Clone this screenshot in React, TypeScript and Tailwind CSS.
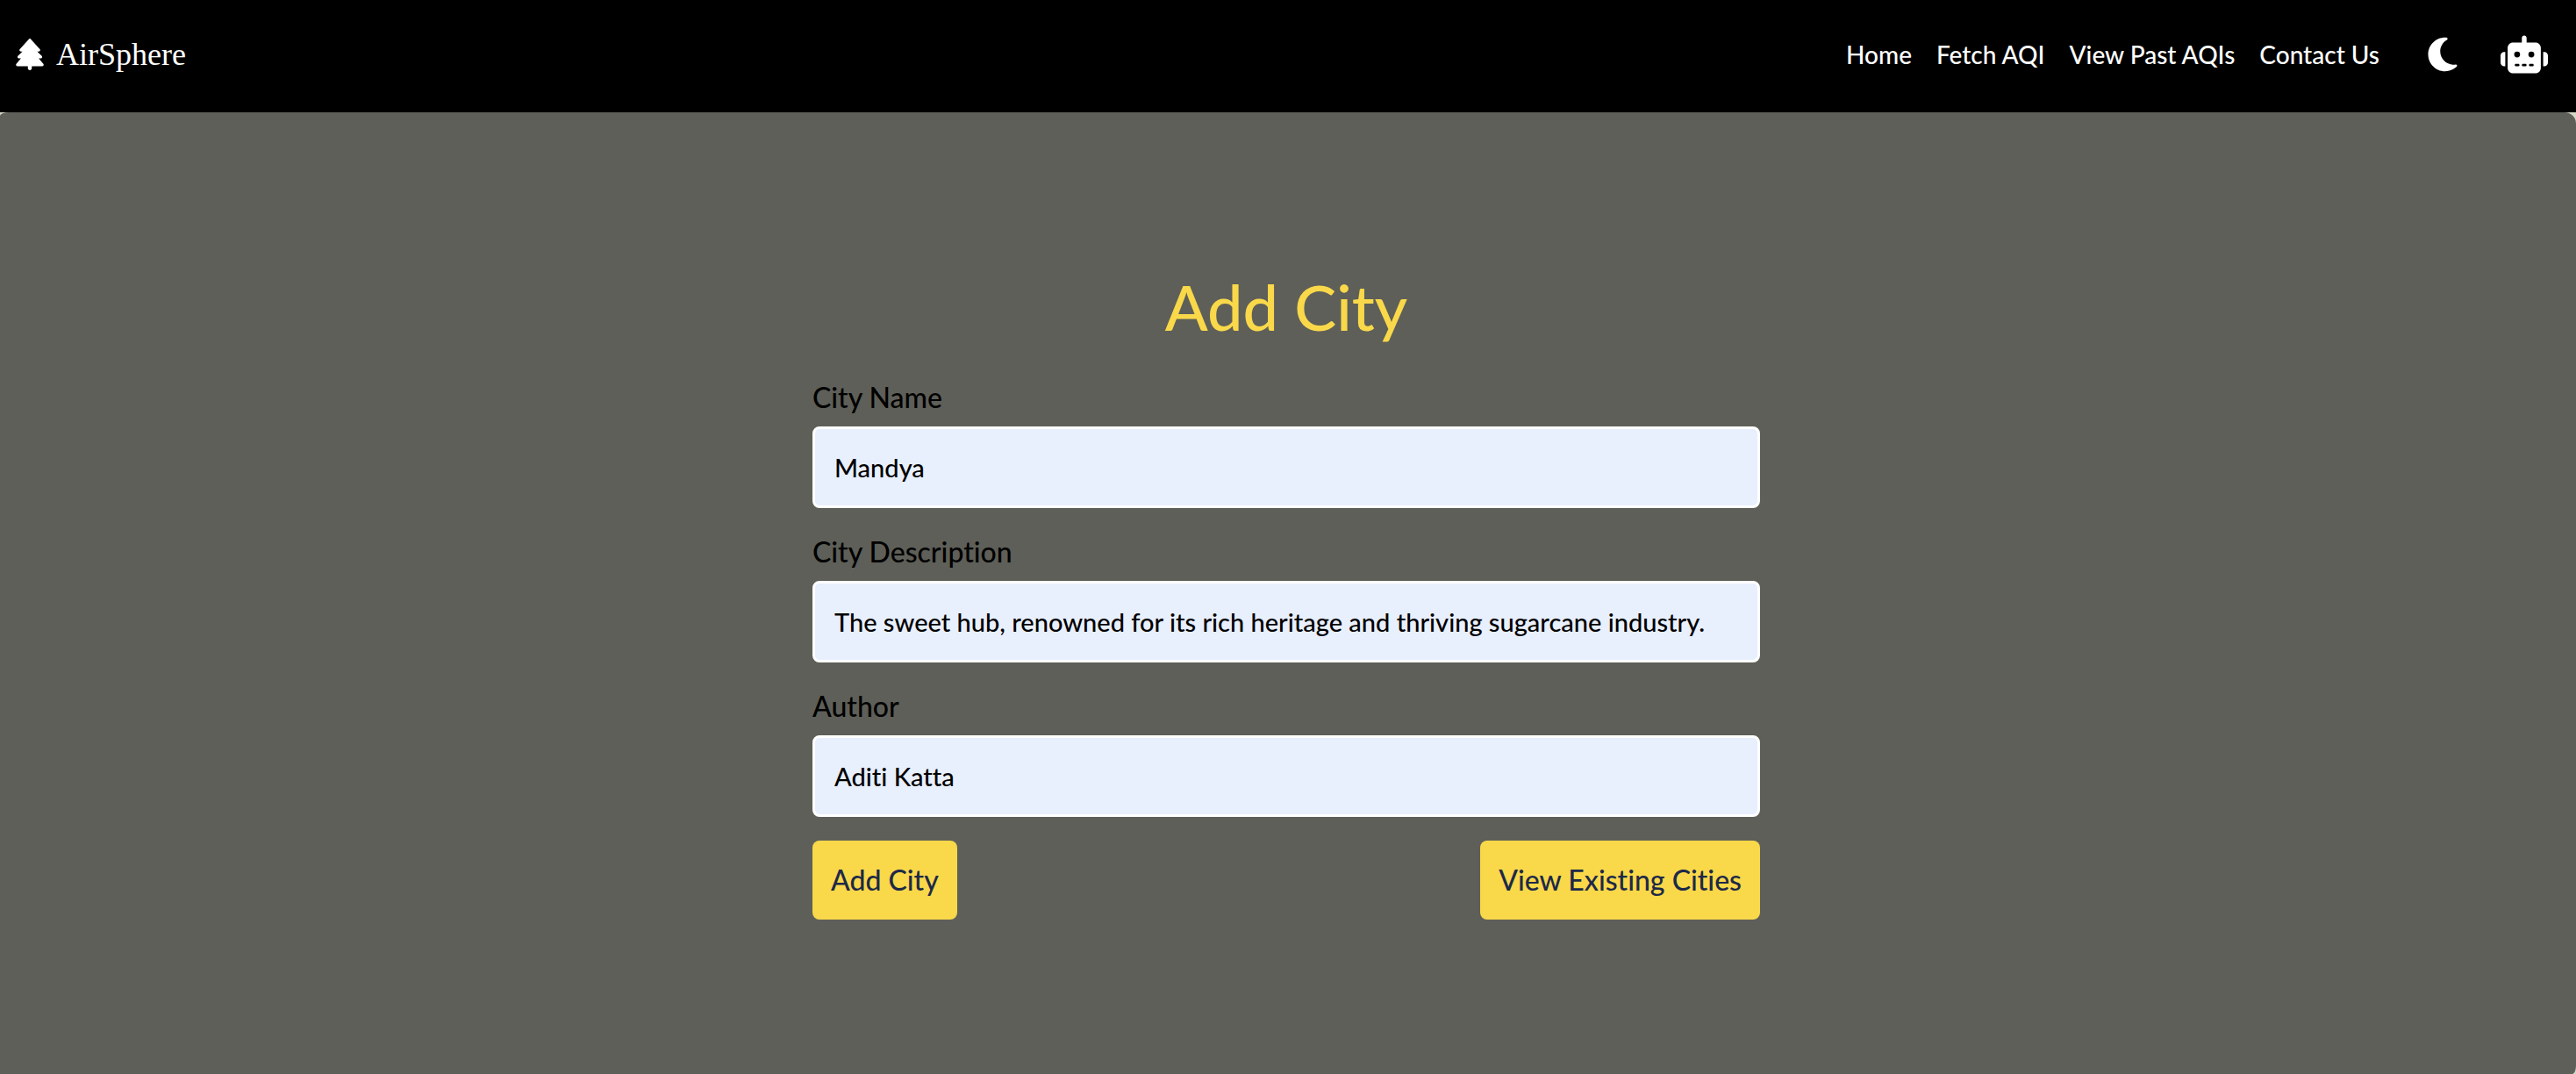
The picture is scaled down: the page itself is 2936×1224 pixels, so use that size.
import { FaMoon, FaRobot, FaTree } from "react-icons/fa6";

const links = ["Home", "Fetch AQI", "View Past AQIs", "Contact Us"];

const fields = [
  { id: "city-name", label: "City Name", value: "Mandya" },
  {
    id: "city-description",
    label: "City Description",
    value: "The sweet hub, renowned for its rich heritage and thriving sugarcane industry.",
  },
  { id: "author", label: "Author", value: "Aditi Katta" },
];

function Header() {
  return (
    <header className="flex h-32 shrink-0 items-center justify-between bg-black pr-8 pb-1 pl-[18px] text-white">
      <a href="#" className="flex items-center gap-3.5 font-['Liberation_Serif',serif] text-4xl">
        <span className="flex w-8 justify-center">
          <FaTree className="size-9 shrink-0" />
        </span>
        AirSphere
      </a>
      <div className="flex items-center">
        <nav className="flex gap-7 text-[28px] leading-10 font-medium">
          {links.map((link) => (
            <a key={link} href="#" className="whitespace-nowrap">
              {link}
            </a>
          ))}
        </nav>
        <button type="button" aria-label="Toggle dark mode" className="ml-[50px]">
          <FaMoon className="size-11" />
        </button>
        <button type="button" aria-label="Open chatbot" className="ml-11">
          <FaRobot className="size-[54px]" />
        </button>
      </div>
    </header>
  );
}

export default function App() {
  return (
    <div className="flex min-h-screen flex-col bg-[#d6d7c6] font-['Lato',sans-serif] [font-variant-ligatures:none]">
      <Header />
      <main className="flex flex-1 flex-col items-center rounded-tl-[10px_4px] rounded-tr-[13px] rounded-br-[4px_10px] bg-[#5e5f58] pt-[181px] pr-7 pb-24 pl-6">
        <form className="flex w-full max-w-[1080px] flex-col" onSubmit={(e) => e.preventDefault()}>
          <h1 className="mb-11 text-center text-7xl leading-20 font-medium text-[#f9d84a]">Add City</h1>
          <div className="flex flex-col gap-[30px]">
            {fields.map((f) => (
              <div key={f.id} className="flex flex-col gap-[13px]">
                <label htmlFor={f.id} className="text-[32px] leading-10 font-medium text-black">
                  {f.label}
                </label>
                <input
                  id={f.id}
                  type="text"
                  defaultValue={f.value}
                  className="h-[93px] w-full rounded-lg border-3 border-white bg-[#e8effd] px-[22px] text-[29px] font-medium text-black"
                />
              </div>
            ))}
          </div>
          <div className="mt-[27px] flex justify-between text-[32px] leading-10 font-medium text-[#1d2947]">
            <button type="submit" className="h-[90px] rounded-lg bg-[#f9d84a] px-[21px]">
              Add City
            </button>
            <button type="button" className="h-[90px] rounded-lg bg-[#f9d84a] px-[21px]">
              View Existing Cities
            </button>
          </div>
        </form>
      </main>
    </div>
  );
}
